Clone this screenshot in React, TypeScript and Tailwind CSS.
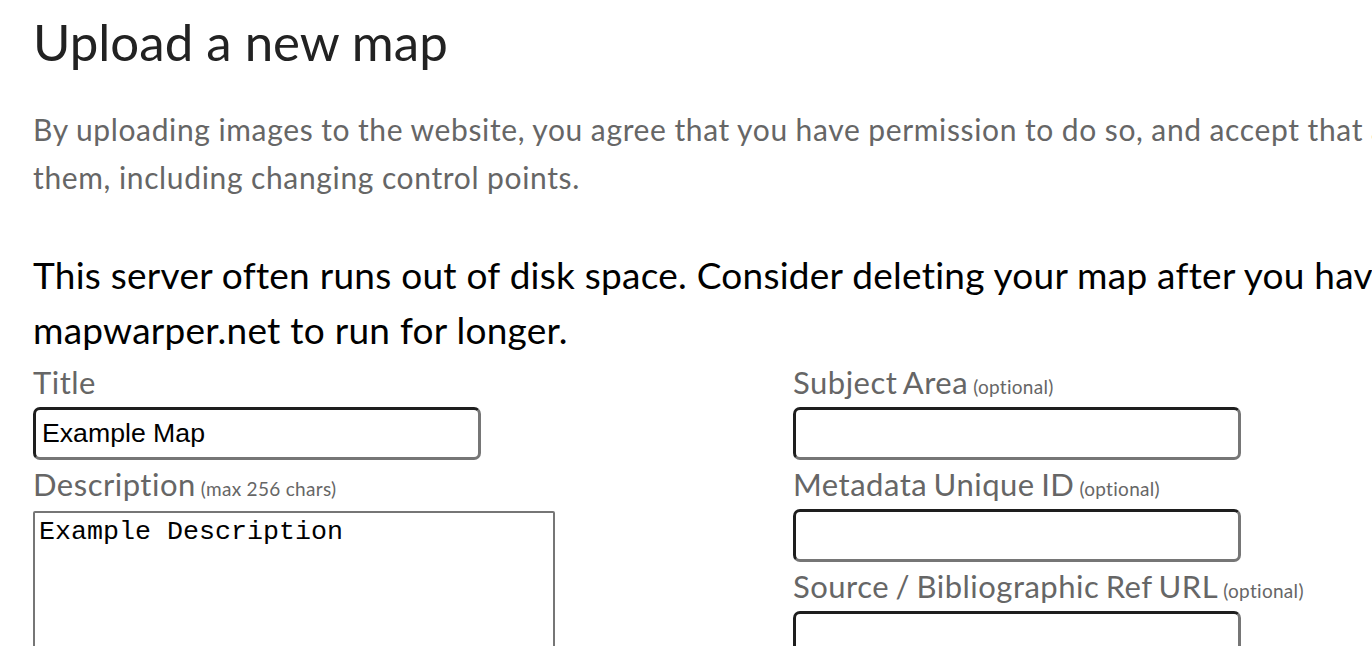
import type { ReactNode } from "react";

const lato = "font-['Lato',_'Liberation_Sans',_sans-serif]";

function Label({ text, note }: { text: string; note?: string }) {
  return (
    <label className="mt-[4px] block h-[40px] whitespace-nowrap text-[31px] leading-[40px] tracking-[0.5px] text-[#666] [word-spacing:-2px]">
      {text}
      {note && <span className="ml-[5px] text-[19px] tracking-[0.3px] [word-spacing:0px]">{note}</span>}
    </label>
  );
}

function TextInput({ value = "" }: { value?: string }) {
  return (
    <input
      type="text"
      defaultValue={value}
      className="mt-[5px] block h-[53px] w-[448px] rounded-[7px] border-[3px] border-t-[#1e1e1e] border-l-[#1e1e1e] border-r-[#767676] border-b-[#767676] bg-white px-[6px] font-['Liberation_Sans',_Arial,_sans-serif] text-[26.67px] text-black outline-none"
    />
  );
}

function Column({ children }: { children: ReactNode }) {
  return <div className="flex w-[760px] flex-col">{children}</div>;
}

export default function App() {
  return (
    <div className={`h-[646px] w-[1372px] overflow-hidden bg-white ${lato}`}>
      <div className="w-[2000px] pl-[33px]">
        <h1 className="pt-[12px] text-[51px] leading-[60px] text-[#222]">Upload a new map</h1>

        <p className="mt-[33px] whitespace-nowrap text-[30px] leading-[48px] tracking-[0.65px] text-[#666] [word-spacing:-0.5px]">
          By uploading images to the website, you agree that you have permission to do so, and accept that
          anyone else can edit
          <br />
          them, including changing control points.
        </p>

        <h4 className="mt-[46px] whitespace-nowrap text-[37px] leading-[55px] tracking-[0.25px] text-black">
          This server often runs out of disk space. Consider deleting your map after you have
          exported it, to allow
          <br />
          mapwarper.net to run for longer.
        </h4>

        <div className="mt-[1px] flex">
          <Column>
            <Label text="Title" />
            <TextInput value="Example Map" />
            <Label text="Description" note="(max 256 chars)" />
            <textarea
              defaultValue="Example Description"
              className="mt-[7px] block h-[200px] w-[522px] resize-none rounded-[2px] border-2 border-[#767676] bg-white px-[4px] pt-[4px] font-['Liberation_Mono',_'Courier_New',_monospace] text-[26.67px] leading-[31px] text-black outline-none"
            />
          </Column>
          <Column>
            <Label text="Subject Area" note="(optional)" />
            <TextInput />
            <Label text="Metadata Unique ID" note="(optional)" />
            <TextInput />
            <Label text="Source / Bibliographic Ref URL" note="(optional)" />
            <TextInput />
          </Column>
        </div>
      </div>
    </div>
  );
}
